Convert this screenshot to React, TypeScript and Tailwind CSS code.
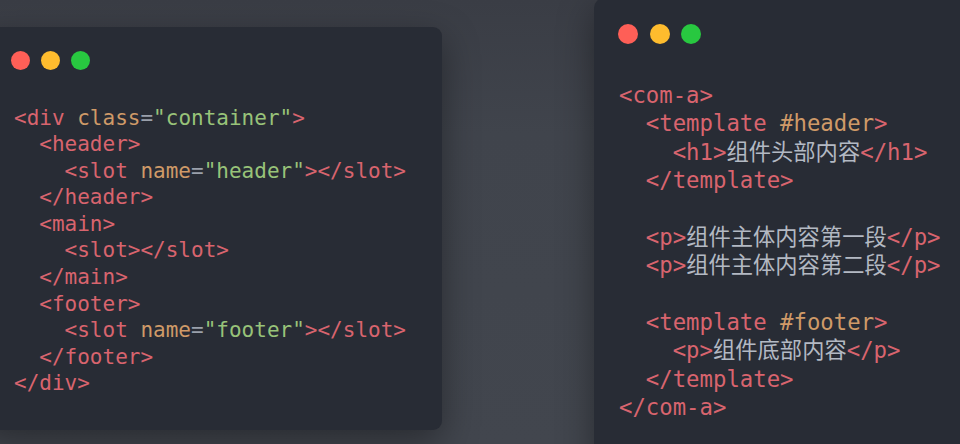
type Tok = [string, string]

const RED = 'text-[#d8646e]'
const ORG = 'text-[#cf9a68]'
const GRN = 'text-[#98c379]'
const GRY = 'text-[#9aa0ab]'
const TXT = 'text-[#b3b9c3]'

const leftCode: Tok[][] = [
  [['<div ', RED], ['class', ORG], ['=', GRY], ['"container"', GRN], ['>', RED]],
  [['  <header>', RED]],
  [['    <slot ', RED], ['name', ORG], ['=', GRY], ['"header"', GRN], ['></slot>', RED]],
  [['  </header>', RED]],
  [['  <main>', RED]],
  [['    <slot></slot>', RED]],
  [['  </main>', RED]],
  [['  <footer>', RED]],
  [['    <slot ', RED], ['name', ORG], ['=', GRY], ['"footer"', GRN], ['></slot>', RED]],
  [['  </footer>', RED]],
  [['</div>', RED]],
]

const rightCode: Tok[][] = [
  [['<com-a>', RED]],
  [['  <template ', RED], ['#header', ORG], ['>', RED]],
  [['    <h1>', RED], ['组件头部内容', TXT], ['</h1>', RED]],
  [['  </template>', RED]],
  [],
  [['  <p>', RED], ['组件主体内容第一段', TXT], ['</p>', RED]],
  [['  <p>', RED], ['组件主体内容第二段', TXT], ['</p>', RED]],
  [],
  [['  <template ', RED], ['#footer', ORG], ['>', RED]],
  [['    <p>', RED], ['组件底部内容', TXT], ['</p>', RED]],
  [['  </template>', RED]],
  [['</com-a>', RED]],
]

function Dots({ size }: { size: 'sm' | 'lg' }) {
  const d = size === 'sm' ? 'w-[19px] h-[19px]' : 'w-[20px] h-[20px]'
  return (
    <div className={size === 'sm' ? 'flex gap-[11px]' : 'flex gap-[11.5px]'}>
      <span className={`${d} rounded-full bg-[#fe5f57]`} />
      <span className={`${d} rounded-full bg-[#febc2e]`} />
      <span className={`${d} rounded-full bg-[#28c840]`} />
    </div>
  )
}

function Code({ lines, className }: { lines: Tok[][]; className: string }) {
  return (
    <div className={`whitespace-pre ${className}`}>
      {lines.map((line, i) => (
        <div key={i}>
          {line.length === 0 ? ' ' : line.map(([t, c], j) => <span key={j} className={c}>{t}</span>)}
        </div>
      ))}
    </div>
  )
}

const mono = "font-['DejaVu_Sans_Mono','Noto_Sans_CJK_SC',monospace]"

export default function App() {
  return (
    <div className="w-[960px] h-[444px] overflow-hidden flex items-start bg-[linear-gradient(180deg,#3a3d45_0%,#40444c_30%,#42464e_100%)]">

      {/* ── Left window ── */}
      <div className="shrink-0 mt-[27px] -ml-[20px] w-[462px] h-[403px] rounded-[9px] bg-[#282c35] pl-[31px] pt-[23.5px] shadow-[0_12px_36px_rgba(0,0,0,0.38)]">
        <Dots size="sm" />
        <Code lines={leftCode} className={`${mono} mt-[35px] ml-[3px] text-[21px] leading-[26.6px]`} />
      </div>

      {/* ── Right window ── */}
      <div className="shrink-0 -mt-[2px] ml-[152px] w-[400px] h-[470px] rounded-[10px] bg-[#282c35] pl-[24px] pt-[26px] shadow-[0_12px_36px_rgba(0,0,0,0.38)]">
        <Dots size="lg" />
        <Code lines={rightCode} className={`${mono} mt-[37px] ml-[1px] text-[22.3px] leading-[28.36px]`} />
      </div>
    </div>
  )
}
